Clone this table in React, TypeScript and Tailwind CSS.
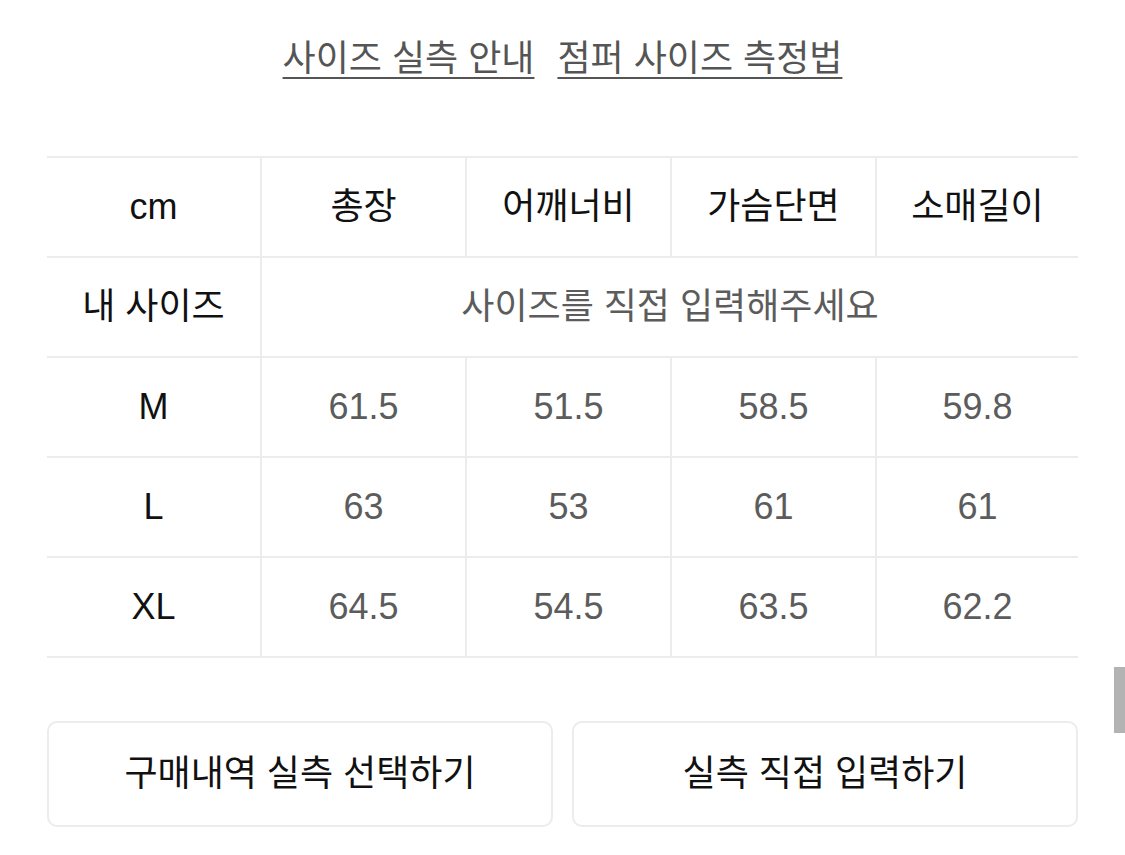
import React from "react";

const font = { fontFamily: '"Liberation Sans", "Noto Sans CJK KR", sans-serif' };

const cols = ["총장", "어깨너비", "가슴단면", "소매길이"];
const rows = [
  { size: "M", vals: ["61.5", "51.5", "58.5", "59.8"] },
  { size: "L", vals: ["63", "53", "61", "61"] },
  { size: "XL", vals: ["64.5", "54.5", "63.5", "62.2"] },
];

const cell = "h-[100px] flex items-center justify-center pb-[1px] text-[36px] border-b-2 border-[#ececec]";

export default function App() {
  return (
    <div className="relative w-[1125px] h-[855px] bg-white overflow-hidden" style={font}>
      <div className="h-[156px] flex justify-center gap-[23px] pt-[37px]">
        <span className="text-[36px] leading-[44px] text-[#555] underline decoration-2 underline-offset-[6px]">사이즈 실측 안내</span>
        <span className="text-[36px] leading-[44px] text-[#555] underline decoration-2 underline-offset-[6px]">점퍼 사이즈 측정법</span>
      </div>
      <div className="mx-[47px]">
        <div className="grid grid-cols-[213px_205px_205px_205px_203px] border-t-2 border-[#ececec]">
          <div className={`${cell} text-[#111]`}>cm</div>
          {cols.map((c) => (
            <div key={c} className={`${cell} border-l-2 text-[#111]`}>{c}</div>
          ))}
          <div className={`${cell} text-[#111]`}>내 사이즈</div>
          <div className={`${cell} col-span-4 border-l-2 text-[#5c5c5c]`}>사이즈를 직접 입력해주세요</div>
          {rows.map((r) => (
            <React.Fragment key={r.size}>
              <div className={`${cell} text-[#111]`}>{r.size}</div>
              {r.vals.map((v, i) => (
                <div key={i} className={`${cell} border-l-2 text-[#5c5c5c]`}>{v}</div>
              ))}
            </React.Fragment>
          ))}
        </div>
        <div className="grid grid-cols-2 gap-[19px] mt-[63px]">
          <button className="h-[106px] rounded-[10px] border-2 border-[#ececec] bg-white text-[36px] text-[#111]" style={font}>구매내역 실측 선택하기</button>
          <button className="h-[106px] rounded-[10px] border-2 border-[#ececec] bg-white text-[36px] text-[#111]" style={font}>실측 직접 입력하기</button>
        </div>
      </div>
      <div className="absolute left-[1114px] top-[667px] w-[11px] h-[66px] bg-[#b3b3b3]" />
    </div>
  );
}
